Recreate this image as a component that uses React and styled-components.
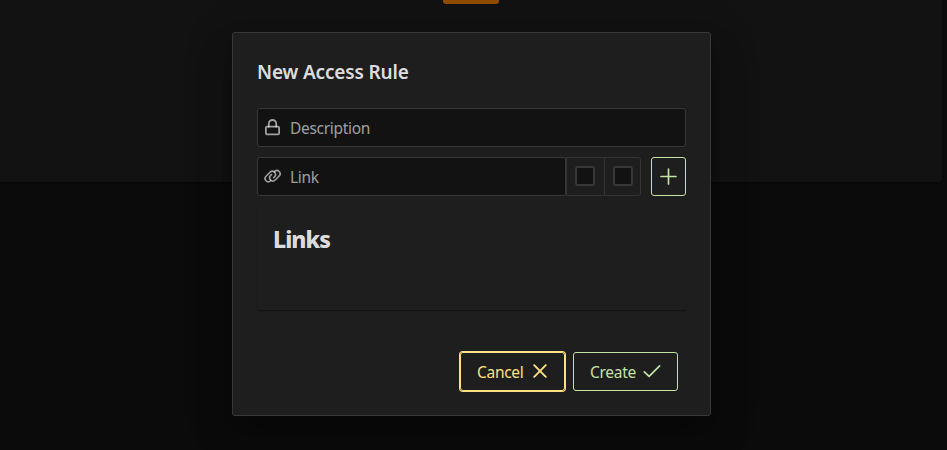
import React from "react";
import styled, { createGlobalStyle } from "styled-components";

const Global = createGlobalStyle`
  * { box-sizing: border-box; }
  body { margin: 0; background: #0b0b0b; overflow: hidden; font-family: "Noto Sans", "Open Sans", sans-serif; font-size: 16px; }
`;

const Page = styled.div`
  position: relative;
  height: 450px;
  overflow: hidden;
  background: #0b0b0b;
`;

const BackCard = styled.section`
  display: flex;
  justify-content: center;
  align-items: flex-start;
  width: 942px;
  height: 182px;
  background: #121212;
  border-radius: 0 0 3px 0;
  box-shadow: 0 1px 2px rgba(0, 0, 0, 0.4);
`;

const BackButton = styled.div`
  width: 56px;
  height: 4px;
  background: #914c00;
  border-radius: 0 0 3px 3px;
`;

const Dialog = styled.div`
  position: absolute;
  left: 232px;
  top: 32px;
  width: 479px;
  height: 384px;
  display: flex;
  flex-direction: column;
  padding: 24px;
  background: #1e1e1e;
  border: 1px solid #383838;
  border-radius: 3px;
  box-shadow: 0 11px 15px -7px rgba(0, 0, 0, 0.2), 0 24px 38px 3px rgba(0, 0, 0, 0.14), 0 9px 46px 8px rgba(0, 0, 0, 0.12);
`;

const Title = styled.h1`
  margin: 0 0 24px;
  height: 27px;
  line-height: 30px;
  font-size: 19px;
  font-weight: 600;
  letter-spacing: -0.15px;
  color: rgba(255, 255, 255, 0.87);
`;

const Field = styled.div`
  display: flex;
  align-items: center;
  flex: 1;
  height: 39px;
  gap: 8px;
  padding: 0 6px;
  background: #121212;
  border: 1px solid #383838;
  border-radius: 3px;
  color: rgba(255, 255, 255, 0.6);
`;

const Placeholder = styled.span`
  font-size: 15.5px;
  line-height: 22px;
  letter-spacing: -0.3px;
`;

const Fields = styled.div`
  display: grid;
  grid-template-rows: 39px 39px;
  row-gap: 10px;
`;

const Row = styled.div`
  display: flex;
`;

const Addon = styled.div`
  display: flex;
  align-items: flex-start;
  width: ${(p) => p.$width}px;
  height: 39px;
  padding: 8px 0 0 8px;
  border: 1px solid #343434;
  border-right-width: ${(p) => (p.$last ? 1 : 0)}px;
  border-radius: ${(p) => (p.$last ? "0 3px 3px 0" : "0")};
`;

const Checkbox = styled.div`
  width: 20px;
  height: 20px;
  background: #121212;
  border: 2px solid #383838;
  border-radius: 3px;
`;

const Button = styled.button`
  display: flex;
  align-items: center;
  justify-content: space-between;
  width: ${(p) => p.$width}px;
  height: 39px;
  padding: 0 ${(p) => p.$pad ?? 16}px 1px;
  margin-left: ${(p) => p.$gap || 0}px;
  color: ${(p) => p.$color};
  background: transparent;
  border: 1px solid ${(p) => p.$color};
  border-radius: 3px;
  box-shadow: ${(p) => (p.$focused ? `0 0 0 1px ${p.$color}` : "none")};
  font-family: inherit;
  font-size: 15.5px;
  line-height: 22px;
`;

const ButtonLabel = styled.span`
  padding-top: 2px;
  letter-spacing: ${(p) => p.$spacing};
`;

const LinksCard = styled.section`
  height: 104px;
  margin-top: 10px;
  padding: 16px;
  background: #1e1e1e;
  border-radius: 3px;
  box-shadow: 0 2px 1px -1px rgba(0, 0, 0, 0.2), 0 1px 1px rgba(0, 0, 0, 0.12), 0 1px 2px rgba(0, 0, 0, 0.06);
`;

const CardTitle = styled.h2`
  margin: 0;
  font-size: 23px;
  line-height: 34px;
  font-weight: 800;
  letter-spacing: -0.95px;
  color: rgba(255, 255, 255, 0.87);
`;

const Footer = styled.footer`
  display: flex;
  justify-content: flex-end;
  margin-top: 42px;
  padding-right: 8px;
`;

const Icon = styled.svg`
  display: block;
  flex: none;
  fill: none;
  stroke: currentColor;
  stroke-width: ${(p) => p.$weight || 1.5};
  stroke-linecap: round;
  stroke-linejoin: round;
`;

const LockIcon = () => (
  <Icon width="18" height="18" viewBox="0 0 18 18" $weight={1.8}>
    <rect x="1.9" y="7.6" width="13.2" height="7.8" rx="1.2" />
    <path d="M4.8 7.6V4.4a3.7 3.4 0 0 1 7.4 0v3.2" />
  </Icon>
);

const LinkIcon = () => (
  <Icon width="18" height="16" viewBox="0 0 18 16" $weight={1.6}>
    <rect x="-6" y="-3.2" width="12" height="6.4" rx="3.2" strokeDasharray="16.7 4 11" transform="translate(6.3 7.5) rotate(-45)" />
    <rect x="-6" y="-3.2" width="12" height="6.4" rx="3.2" strokeDasharray="16.7 4 11" transform="translate(10.9 6.7) rotate(135)" />
  </Icon>
);

const PlusIcon = () => (
  <Icon width="17" height="17" viewBox="0 0 17 17" $weight={1.7}>
    <path d="M8.5 1v15M1 8.5h15" />
  </Icon>
);

const CrossIcon = () => (
  <Icon width="16" height="16" viewBox="0 0 16 16" $weight={1.9}>
    <path d="M2.2 2.2l11.6 11.6M13.8 2.2l-11.6 11.6" />
  </Icon>
);

const CheckIcon = () => (
  <Icon width="18" height="16" viewBox="0 0 18 16" $weight={1.7}>
    <path d="M1.3 8.8l4.8 4.6L16.6 2.9" />
  </Icon>
);

export default function App() {
  return (
    <Page>
      <Global />
      <BackCard>
        <BackButton />
      </BackCard>
      <Dialog role="dialog">
        <Title>New Access Rule</Title>
        <Fields>
          <Row>
            <Field>
              <LockIcon />
              <Placeholder>Description</Placeholder>
            </Field>
          </Row>
          <Row>
            <Field>
              <LinkIcon />
              <Placeholder>Link</Placeholder>
            </Field>
            <Addon $width={38}>
              <Checkbox />
            </Addon>
            <Addon $width={37} $last>
              <Checkbox />
            </Addon>
            <Button $width={35} $pad={8} $gap={10} $color="#c5e1a5" aria-label="Add">
              <PlusIcon />
            </Button>
          </Row>
        </Fields>
        <LinksCard>
          <CardTitle>Links</CardTitle>
        </LinksCard>
        <Footer>
          <Button $width={105} $color="#ffe082" $focused>
            <ButtonLabel $spacing="-0.3px">Cancel</ButtonLabel>
            <CrossIcon />
          </Button>
          <Button $width={105} $gap={8} $color="#c5e1a5">
            <ButtonLabel $spacing="-0.3px">Create</ButtonLabel>
            <CheckIcon />
          </Button>
        </Footer>
      </Dialog>
    </Page>
  );
}
